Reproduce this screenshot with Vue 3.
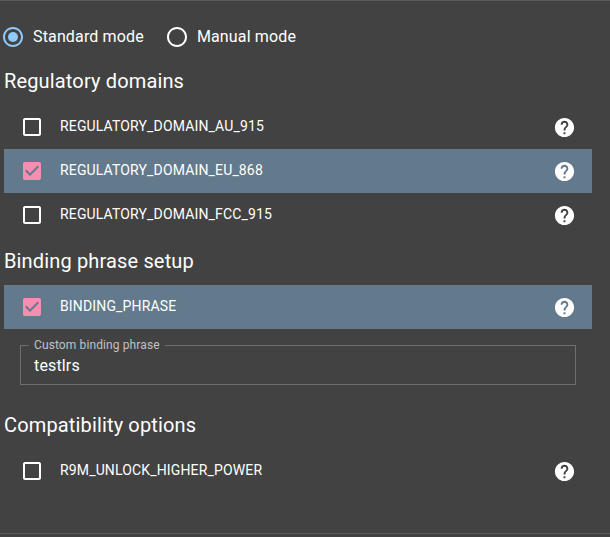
<script setup>
import { ref } from 'vue'

const mode = ref('Standard mode')
const modes = ['Standard mode', 'Manual mode']
const phrase = ref('testlrs')
const sections = ref([
  {
    title: 'Regulatory domains',
    options: [
      { key: 'REGULATORY_DOMAIN_AU_915', on: false },
      { key: 'REGULATORY_DOMAIN_EU_868', on: true },
      { key: 'REGULATORY_DOMAIN_FCC_915', on: false },
    ],
  },
  {
    title: 'Binding phrase setup',
    options: [{ key: 'BINDING_PHRASE', on: true, field: true }],
  },
  {
    title: 'Compatibility options',
    options: [{ key: 'R9M_UNLOCK_HIGHER_POWER', on: false }],
  },
])
</script>

<template>
  <main class="page">
    <div class="modes">
      <div v-for="m in modes" :key="m" class="mode" @click="mode = m">
        <svg class="icon" :class="{ active: mode === m }" viewBox="0 0 24 24">
          <path d="M12 2C6.48 2 2 6.48 2 12s4.48 10 10 10 10-4.48 10-10S17.52 2 12 2zm0 18c-4.42 0-8-3.58-8-8s3.58-8 8-8 8 3.58 8 8-3.58 8-8 8z" />
          <circle v-if="mode === m" cx="12" cy="12" r="5" />
        </svg>
        <span>{{ m }}</span>
      </div>
    </div>

    <section v-for="s in sections" :key="s.title" class="section">
      <h2 class="title">{{ s.title }}</h2>
      <template v-for="o in s.options" :key="o.key">
        <div class="row" :class="{ selected: o.on }" @click="o.on = !o.on">
          <svg class="icon check" viewBox="0 0 24 24">
            <path v-if="o.on" d="M19 3H5c-1.11 0-2 .9-2 2v14c0 1.1.89 2 2 2h14c1.11 0 2-.9 2-2V5c0-1.1-.89-2-2-2zm-9 14l-5-5 1.41-1.41L10 14.17l7.59-7.59L19 8l-9 9z" />
            <path v-else d="M19 5v14H5V5h14m0-2H5c-1.1 0-2 .9-2 2v14c0 1.1.9 2 2 2h14c1.1 0 2-.9 2-2V5c0-1.1-.9-2-2-2z" />
          </svg>
          <span class="name">{{ o.key }}</span>
          <svg class="help" viewBox="0 0 24 24">
            <path d="M12 2C6.48 2 2 6.48 2 12s4.48 10 10 10 10-4.48 10-10S17.52 2 12 2zm1 17h-2v-2h2v2zm2.07-7.75l-.9.92C13.45 12.9 13 13.5 13 15h-2v-.5c0-1.1.45-2.1 1.17-2.83l1.24-1.26c.37-.36.59-.86.59-1.41 0-1.1-.9-2-2-2s-2 .9-2 2H8c0-2.21 1.79-4 4-4s4 1.79 4 4c0 .88-.36 1.68-.93 2.25z" />
          </svg>
        </div>
        <fieldset v-if="o.field" class="field">
          <legend>Custom binding phrase</legend>
          <input v-model="phrase" type="text" aria-label="Custom binding phrase" />
        </fieldset>
      </template>
    </section>
  </main>
</template>

<style>
body {
  background: #424242;
}
</style>

<style scoped>
.page {
  box-sizing: border-box;
  height: 534px;
  padding: 17px 18px 0 4px;
  border-top: 1px solid #5a5a5a;
  border-bottom: 1px solid #5a5a5a;
  background: #424242;
  color: #fff;
  font-family: Roboto, sans-serif;
  font-size: 16px;
  letter-spacing: 0.15px;
}
.icon {
  width: 24px;
  height: 24px;
  flex: none;
  fill: currentColor;
}
.modes {
  display: flex;
  gap: 21px;
  height: 38px;
  margin-left: -3px;
}
.mode {
  display: flex;
  align-items: center;
  gap: 8px;
}
.mode span {
  line-height: 24px;
}
.active {
  color: #90caf9;
}
.title {
  margin: 0;
  height: 49px;
  padding-top: 9px;
  box-sizing: border-box;
  font-size: 20px;
  font-weight: 400;
  line-height: 32px;
}
.section + .section {
  margin-top: -1px;
}
.row {
  display: flex;
  align-items: center;
  height: 44px;
  padding: 0 16px;
  box-sizing: border-box;
}
.name {
  flex: 1;
  margin-left: 16px;
  padding-bottom: 2px;
  font-size: 14px;
  line-height: 20px;
}
.selected {
  background: #63798c;
}
.selected .check {
  color: #f48fb1;
}
.help {
  width: 23px;
  height: 23px;
  fill: #fff;
}
.field {
  box-sizing: border-box;
  height: 46px;
  margin: 10px 16px 16px;
  padding: 0 8px;
  min-width: 0;
  border: 1px solid #6e6e6e;
}
.field legend {
  margin: 0;
  padding: 0 5px;
  color: #c1c1c1;
  font-size: 12px;
  line-height: 12px;
  letter-spacing: 0.11px;
}
.field input {
  display: block;
  width: 100%;
  height: 19px;
  margin-top: 5px;
  padding: 0 5px;
  box-sizing: border-box;
  border: 0;
  outline: 0;
  background: none;
  color: #fff;
  font: inherit;
  letter-spacing: inherit;
}
</style>
